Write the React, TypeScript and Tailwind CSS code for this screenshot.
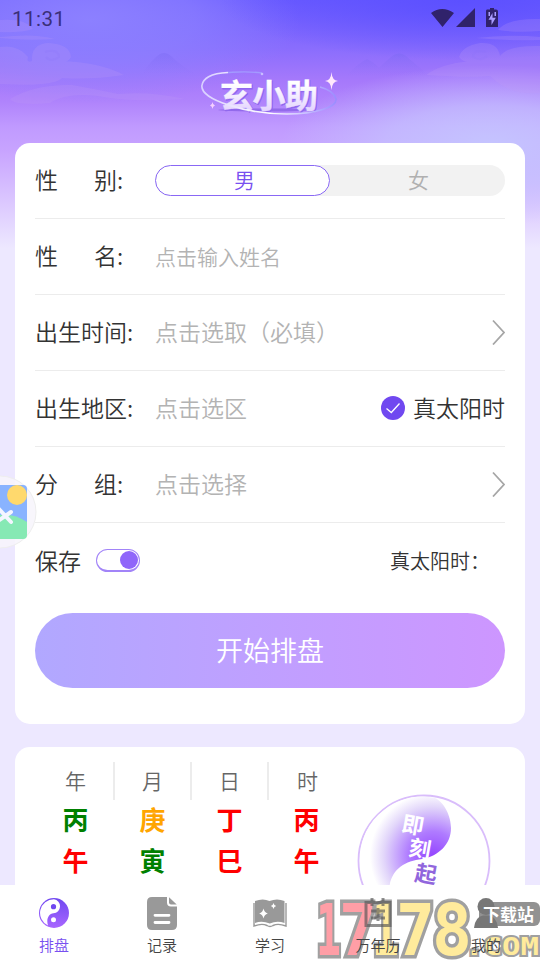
import type { ReactNode } from 'react';

type Tab = { id: string; label: string; icon: ReactNode };
type Pillar = { title: string; stem: string; stemColor: string; branch: string; branchColor: string };

const tabs: Tab[] = [
  { id: 'chart', label: '排盘', icon: <TaijiIcon /> },
  { id: 'records', label: '记录', icon: <RecordIcon /> },
  { id: 'study', label: '学习', icon: <BookIcon /> },
  { id: 'calendar', label: '万年历', icon: <CalendarIcon /> },
  { id: 'mine', label: '我的', icon: <UserIcon /> },
];

const pillars: Pillar[] = [
  { title: '年', stem: '丙', stemColor: 'text-[#008000]', branch: '午', branchColor: 'text-[#ff0000]' },
  { title: '月', stem: '庚', stemColor: 'text-[#ffa500]', branch: '寅', branchColor: 'text-[#008000]' },
  { title: '日', stem: '丁', stemColor: 'text-[#ff0000]', branch: '巳', branchColor: 'text-[#ff0000]' },
  { title: '时', stem: '丙', stemColor: 'text-[#ff0000]', branch: '午', branchColor: 'text-[#ff0000]' },
];

function TaijiIcon() {
  return (
    <svg width="30" height="30" viewBox="0 0 30 30">
      <defs>
        <linearGradient id="taiji" x1="0" y1="0" x2="0" y2="1">
          <stop offset="0" stopColor="#7048f0" />
          <stop offset="1" stopColor="#a866ff" />
        </linearGradient>
      </defs>
      <circle cx="15" cy="15" r="15" fill="url(#taiji)" />
      <path d="M15 1.2A13.8 13.8 0 0 0 9 27.5C7 21 9.5 16 14.5 15.3A7.1 7.1 0 0 0 15 1.2Z" fill="#fff" />
      <circle cx="14.5" cy="8.7" r="2.6" fill="#7048f0" />
      <circle cx="14.5" cy="21.7" r="2.5" fill="#fff" />
    </svg>
  );
}

function RecordIcon() {
  return (
    <svg width="30" height="33" viewBox="0 0 30 33">
      <path d="M5 0H20V5.5Q20 9.5 24 9.5H30V28Q30 33 25 33H5Q0 33 0 28V5Q0 0 5 0Z" fill="#999" />
      <path d="M22 .3 29.7 7.6H24Q22 7.6 22 5.6Z" fill="#999" />
      <path d="M8 18.3H22M8 25.5H22" stroke="#fff" strokeWidth="2.8" strokeLinecap="round" />
    </svg>
  );
}

function BookIcon() {
  return (
    <svg width="34" height="29" viewBox="0 0 34 29">
      <path d="M2 2Q10-1 16.5 2Q24-1 31.5 2V24Q24 21.5 16.8 24.5Q9 21.5 2 24Z" fill="#999" />
      <path d="M1 4V27Q9 24 14 26.5Q17 28.5 20 26.5Q25 24 33 27V4" fill="none" stroke="#999" strokeWidth="1.4" />
      <path d="M10.5 9.5Q11.3 13.5 14.8 14.5Q11.3 15.5 10.5 19.5Q9.7 15.5 6.2 14.5Q9.7 13.5 10.5 9.5Z" fill="#fff" />
      <path d="M20.5 4Q21 6.5 23.2 7Q21 7.5 20.5 10Q20 7.5 17.8 7Q20 6.5 20.5 4Z" fill="#fff" />
    </svg>
  );
}

function CalendarIcon() {
  return (
    <svg width="28" height="30" viewBox="0 0 28 30" fill="none" stroke="#555" strokeOpacity=".65" strokeWidth="3">
      <path d="M2 4.5H26V27.5H2ZM8 0V8M19 0V8M7 13H21M7 20H21M14 10V23" />
    </svg>
  );
}

function UserIcon() {
  return (
    <svg width="24" height="30" viewBox="0 0 24 30" fill="#777">
      <circle cx="12" cy="8.5" r="8.5" />
      <path d="M0 30Q1 19 9 17.5H15Q23 19 24 30Z" />
    </svg>
  );
}

function Backdrop() {
  return (
    <svg className="absolute inset-x-0 top-0" width="540" height="270" viewBox="0 0 540 270">
      <defs>
        <linearGradient id="sky" x1="0" y1="0" x2="0" y2="1">
          <stop offset="0" stopColor="#6a5bff" />
          <stop offset=".18" stopColor="#8a6dfd" />
          <stop offset=".3" stopColor="#a679fb" />
          <stop offset=".38" stopColor="#b084fc" />
          <stop offset=".47" stopColor="#c09aff" />
          <stop offset=".56" stopColor="#c8a4ff" />
          <stop offset=".92" stopColor="#ede8ff" />
        </linearGradient>
        <radialGradient id="skyLeft" gradientUnits="userSpaceOnUse" cx="90" cy="20" r="210" gradientTransform="matrix(1 0 0 .4 0 12)">
          <stop offset="0" stopColor="#8c80ff" />
          <stop offset=".5" stopColor="#8c80ff" stopOpacity=".7" />
          <stop offset="1" stopColor="#8c80ff" stopOpacity="0" />
        </radialGradient>
        <radialGradient id="skyRight" gradientUnits="userSpaceOnUse" cx="490" cy="145" r="210" gradientTransform="matrix(1 0 0 .38 0 90)">
          <stop offset="0" stopColor="#c5c4ff" />
          <stop offset=".5" stopColor="#c5c2ff" stopOpacity=".7" />
          <stop offset="1" stopColor="#c5c0ff" stopOpacity="0" />
        </radialGradient>
        <radialGradient id="skyTop" gradientUnits="userSpaceOnUse" cx="460" cy="0" r="240" gradientTransform="matrix(1 0 0 .25 0 0)">
          <stop offset="0" stopColor="#5c50ff" />
          <stop offset="1" stopColor="#5c50ff" stopOpacity="0" />
        </radialGradient>
        <linearGradient id="hill" x1="0" y1="0" x2="0" y2="1">
          <stop offset="0" stopColor="#7767f0" stopOpacity=".35" />
          <stop offset="1" stopColor="#8a6df5" stopOpacity="0" />
        </linearGradient>
      </defs>
      <rect width="540" height="270" fill="url(#sky)" />
      <rect width="540" height="270" fill="url(#skyLeft)" />
      <rect width="540" height="270" fill="url(#skyRight)" />
      <rect width="540" height="100" fill="url(#skyTop)" />
      <path d="M142 74Q152 59 160 54Q166 51 171 56Q181 66 196 74Z" fill="url(#hill)" />
      <path d="M345 76Q360 62 367 59Q375 63 379 68Q392 55 396 54Q402 52 407 57L430 76Z" fill="url(#hill)" />
      <g fill="#c09af8" fillOpacity=".22">
        <path d="M0 20Q25 18 33 29Q20 33 0 32ZM0 37Q35 33 55 39Q25 41 0 38Z" />
        <path d="M0 47Q18 44 28 57Q26 63 32 61Q31 44 48 43Q70 44 71 57Q67 64 60 61Q100 62 124 75Q90 80 62 78Q54 87 0 84Z" />
        <path d="M10 99Q35 84 72 85Q100 90 118 94Q150 91 185 99Q140 102 110 98Q70 90 50 103Q15 106 10 99Z" />
        <path d="M540 19Q508 18 498 30Q518 33 540 31ZM540 37Q510 34 476 38Q505 41 540 40Z" />
        <path d="M540 46Q508 45 500 56Q498 42 480 43Q462 46 459 57Q464 63 470 61Q440 64 426 75Q470 78 490 76Q510 96 540 93Z" />
      </g>
      <path
        d="M45 52Q58 48 59 57Q51 63 46 57M486 52Q473 49 473 57Q481 62 487 56"
        fill="none"
        stroke="#8c72fb"
        strokeOpacity=".2"
        strokeWidth="2"
      />
    </svg>
  );
}

function StatusBar() {
  return (
    <div className="flex h-9 items-center justify-between pt-0.5 pl-3 pr-[42px]">
      <span className="font-[Roboto] text-[20.5px] font-normal tracking-[0.5px] text-[#3b2f78]">11:31</span>
      <svg width="67" height="21" viewBox="0 0 67 21" fill="#30226b" className="-mt-0.5">
        <path d="M0 5Q11-3 23 5L11.5 19ZM25 19 44 0V19Z" />
        <path d="M56 1.5H59V0H63V1.5H65Q67 1.5 67 3.5V19H55V3.5Q55 1.5 56 1.5Z" />
        <path d="M61.5 5 57.5 11.8H60.5V17L64.8 9.8H61.5ZM57.5 4H59V8H57.5ZM63.5 4H65V8H63.5Z" fill="#a99cff" />
      </svg>
    </div>
  );
}

function Logo() {
  return (
    <svg width="144" height="60" viewBox="0 0 144 60" className="mx-auto">
      <defs>
        <linearGradient id="logoFill" x1="0" y1="0" x2="0" y2="1">
          <stop offset=".3" stopColor="#fff" />
          <stop offset="1" stopColor="#dcc8ff" />
        </linearGradient>
        <linearGradient id="orbit" x1="0" y1="0" x2="1" y2="0">
          <stop offset="0" stopColor="#d9cfff" />
          <stop offset=".5" stopColor="#fff" />
          <stop offset="1" stopColor="#9b8cff" />
        </linearGradient>
      </defs>
      <ellipse cx="68" cy="47" rx="48" ry="1.5" fill="#7d55e0" fillOpacity=".6" />
      <g fontFamily="'Noto Sans CJK SC', sans-serif" fontSize="33" fontWeight="700">
        <text x="23" y="45.5" textLength="98" fill="#9068ee" stroke="#9068ee" strokeWidth="1">玄小助</text>
        <text x="22" y="45" textLength="98" fill="url(#logoFill)" stroke="url(#logoFill)" strokeWidth=".4">玄小助</text>
      </g>
      <path d="M64 10C50 8 40 9 30 9.5" fill="none" stroke="#a39aff" strokeWidth="1.4" />
      <path d="M30 9.5C12 10 5 16 4 22C1 37 50 51 89 51C118 51 139 44 138 36C136 29 130 26 122 24" fill="none" stroke="url(#orbit)" strokeWidth="1.6" />
      <circle cx="64" cy="11" r="1.3" fill="#c9bcff" />
      <path d="M133.5 9Q134 17.5 140 18Q134 18.5 133.5 27Q133 18.5 127 18Q133 17.5 133.5 9Z" fill="#ffe8fc" />
      <path d="M14.5 39Q14.8 42 17 42.5Q14.8 43 14.5 46Q14.2 43 12 42.5Q14.2 42 14.5 39Z" fill="#f5cfff" />
    </svg>
  );
}

function Chevron() {
  return (
    <svg width="14" height="26" viewBox="0 0 14 26" className="-mt-0.5 ml-auto" fill="none" stroke="#a6a6a6" strokeWidth="1.8">
      <path d="M2 1.5 13 13.5 2 25.5" />
    </svg>
  );
}

function FormRow({ label, children }: { label: string[]; children: ReactNode }) {
  return (
    <div className="flex h-[76px] items-center border-b border-[#ececec]">
      <div className="flex w-[120px] shrink-0 gap-9 pb-0.5 text-[23px]">
        {label.map((part) => (
          <span key={part}>{part}</span>
        ))}
      </div>
      {children}
    </div>
  );
}

function BirthForm() {
  return (
    <section className="h-[581px] shrink-0 rounded-[15px] bg-white px-5 text-[#333]">
      <FormRow label={['性', '别:']}>
        <div className="flex h-[31px] flex-1 rounded-full bg-[#f2f2f2] text-[21px] leading-[27px]">
          <button className="w-[175px] rounded-full border border-[#8a68f5] bg-white pb-0.5 pl-1 text-[#7850f0]">男</button>
          <button className="flex-1 pb-0.5 pl-0.5 text-[#b0b0b0]">女</button>
        </div>
      </FormRow>
      <FormRow label={['性', '名:']}>
        <span className="text-[21px] text-[#b3b3b3]">点击输入姓名</span>
      </FormRow>
      <FormRow label={['出生时间:']}>
        <span className="pb-0.5 text-[23px] text-[#b3b3b3]">点击选取（必填）</span>
        <Chevron />
      </FormRow>
      <FormRow label={['出生地区:']}>
        <span className="pb-0.5 text-[23px] text-[#b3b3b3]">点击选区</span>
        <label className="ml-auto flex items-center gap-2 pb-0.5 text-[23px]">
          <svg width="24" height="24" viewBox="0 0 24 24">
            <circle cx="12" cy="12" r="12" fill="#7048f0" />
            <path d="M5.5 12.5 10.3 16.5 18.5 7.5" fill="none" stroke="#fff" strokeWidth="1.3" />
          </svg>
          真太阳时
        </label>
      </FormRow>
      <FormRow label={['分', '组:']}>
        <span className="pb-0.5 text-[23px] text-[#b3b3b3]">点击选择</span>
        <Chevron />
      </FormRow>
      <div className="flex h-[75px] items-center">
        <span className="text-[23px]">保存</span>
        <button className="ml-[15px] flex h-[23px] w-11 items-center justify-end rounded-full border border-b-2 border-[#a284f8] px-px">
          <span className="size-[18px] rounded-full bg-[#8f66fa]" />
        </button>
        <span className="ml-auto w-[115px] text-[20px] whitespace-nowrap">真太阳时：</span>
      </div>
      <button className="mt-[15px] h-[75px] w-full rounded-full bg-linear-to-r from-[#b1a8ff] to-[#cd96ff] text-[27px] text-white">
        开始排盘
      </button>
    </section>
  );
}

function TaijiDial() {
  return (
    <svg width="134" height="134" viewBox="0 0 134 134" className="mt-[47px] ml-[11px] shrink-0">
      <defs>
        <radialGradient id="dial" gradientUnits="userSpaceOnUse" cx="76" cy="62" r="70">
          <stop offset="0" stopColor="#9445ff" />
          <stop offset=".35" stopColor="#af7bff" />
          <stop offset=".7" stopColor="#e2d6fa" />
          <stop offset=".9" stopColor="#fff" />
        </radialGradient>
      </defs>
      <circle cx="67" cy="67" r="65.5" fill="#fff" stroke="#d9bdfb" strokeWidth="1.8" />
      <path d="M78 4C87 8 94 22 94 34C94 50 82 62 65 65C46 67 32 77 32 99V120C-6 98-6 40 27 16C42 4 60 0 78 4Z" fill="url(#dial)" />
      <g fontFamily="'Noto Sans CJK SC', sans-serif" fontSize="22" fontWeight="700" textAnchor="middle">
        <text transform="translate(56 31) rotate(10)" y="8" fill="#fff">即</text>
        <text transform="translate(63 55) rotate(10)" y="8" fill="#fff">刻</text>
        <text transform="translate(69 80) rotate(10)" y="8" fill="#9166dd">起</text>
      </g>
    </svg>
  );
}

function PillarCard() {
  return (
    <section className="mt-[23px] flex h-[240px] shrink-0 rounded-[15px] bg-white pl-[23px]">
      <div className="flex pt-[15px]">
        {pillars.map((pillar, i) => (
          <div key={pillar.title} className="flex w-[77px] flex-col items-center">
            <div
              className={`flex h-[38px] w-full items-center justify-center text-[21px] text-[#666] ${
                i < 3 ? 'border-r-2 border-[#ececec]' : ''
              }`}
            >
              {pillar.title}
            </div>
            <div className="-mt-0.5 -ml-0.5 flex flex-col text-[26px] leading-[41px] font-bold">
              <span className={pillar.stemColor}>{pillar.stem}</span>
              <span className={pillar.branchColor}>{pillar.branch}</span>
            </div>
          </div>
        ))}
      </div>
      <TaijiDial />
    </section>
  );
}

function FloatingPicture() {
  return (
    <svg width="40" height="80" viewBox="0 0 40 80" className="absolute top-[472px] left-0">
      <defs>
        <clipPath id="tile">
          <path d="M0 13H23Q27 13 27 17V63Q27 67 23 67H0Z" />
        </clipPath>
      </defs>
      <circle cx="0" cy="40" r="36" fill="#f7f5fb" fillOpacity=".85" stroke="#eee" strokeWidth="1" />
      <g clipPath="url(#tile)" opacity=".95">
        <rect y="13" width="27" height="54" fill="#83afff" />
        <path d="M0 43Q14 41 27 50V67H0Z" fill="#80e8b0" />
        <circle cx="17" cy="23" r="10" fill="#ffd766" />
      </g>
      <path d="M-2 36 11 50M-2 49 11 40" stroke="#f4f5ff" strokeWidth="4" strokeLinecap="round" />
    </svg>
  );
}

function SiteName() {
  return (
    <svg width="228" height="64" viewBox="0 0 228 64" className="absolute right-0 bottom-0">
      <g
        fontFamily="'DejaVu Sans Mono', monospace"
        fontWeight="700"
        stroke="#a0a0a0"
        strokeWidth="7"
        paintOrder="stroke"
        strokeLinejoin="miter"
      >
        <g fontSize="71" transform="translate(0 59)">
          <text x="4" textLength="25" lengthAdjust="spacingAndGlyphs" fill="#ff9ea6">1</text>
          <text x="27" textLength="38" lengthAdjust="spacingAndGlyphs" fill="#ff9ea6">7</text>
          <text x="60" textLength="27" lengthAdjust="spacingAndGlyphs" fill="#ffeb9c">1</text>
          <text x="84" textLength="39" lengthAdjust="spacingAndGlyphs" fill="#ffeb9c">7</text>
          <text x="120" textLength="40" lengthAdjust="spacingAndGlyphs" fill="#ffeb9c">8</text>
        </g>
        <text x="153" y="59" fontSize="25" strokeWidth="4" textLength="74" lengthAdjust="spacingAndGlyphs" fill="#ffeb9c">.COM</text>
      </g>
    </svg>
  );
}

function TabBar() {
  return (
    <nav className="relative flex h-[75px] shrink-0 bg-white">
      <SiteName />
      {tabs.map((tab, i) => (
        <button key={tab.id} className="relative flex flex-1 flex-col items-center">
          <span className="flex h-14 items-center">{tab.icon}</span>
          <span className={`-mt-[7px] text-[15px] leading-[22px] ${i === 0 ? 'text-[#7850f0]' : 'text-[#444]'}`}>{tab.label}</span>
        </button>
      ))}
      <span className="absolute top-[17px] right-0 h-6 w-[61px] rounded-lg rounded-r-md bg-[#777]/80 pl-1 text-[17px] leading-[23px] font-bold text-white">
        下载站
      </span>
    </nav>
  );
}

export default function App() {
  return (
    <div
      lang="zh-CN"
      className="relative flex h-[960px] w-[540px] flex-col overflow-hidden bg-[#ede8ff] font-['Noto_Sans_CJK_SC',sans-serif] font-[350]"
    >
      <Backdrop />
      <header className="relative h-[143px] shrink-0">
        <StatusBar />
        <div className="pt-[27px]">
          <Logo />
        </div>
      </header>
      <main className="relative flex min-h-0 flex-1 flex-col overflow-hidden px-[15px]">
        <BirthForm />
        <PillarCard />
      </main>
      <FloatingPicture />
      <TabBar />
    </div>
  );
}
